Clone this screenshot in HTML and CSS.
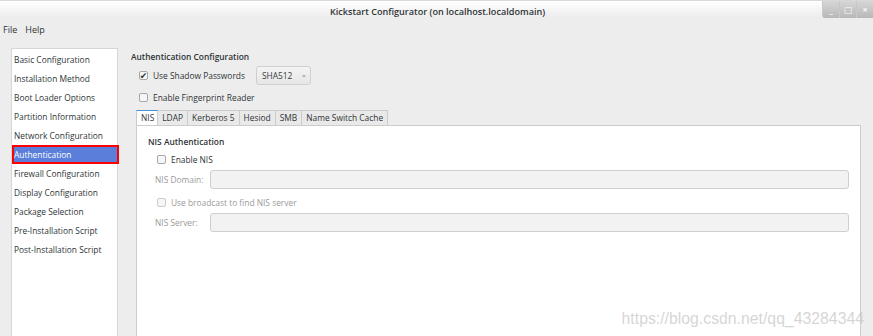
FILE: index.html
```html
<!DOCTYPE html>
<html>
<head>
  <meta charset="UTF-8">
  <title>Kickstart Configurator</title>
  <link rel="stylesheet" href="styles.css">
</head>
<body>
  <div class="titlebar">
    <span class="title">Kickstart Configurator (on localhost.localdomain)</span>
    <div class="wm-buttons">
      <span class="wm-btn">_</span>
      <span class="wm-btn">&#9633;</span>
      <span class="wm-btn">&#215;</span>
    </div>
  </div>
  <div class="menubar">
    <span>File</span>
    <span>Help</span>
  </div>

  <div class="content">
    <ul class="sidebar">
      <li>Basic Configuration</li>
      <li>Installation Method</li>
      <li>Boot Loader Options</li>
      <li>Partition Information</li>
      <li>Network Configuration</li>
      <li class="selected">Authentication</li>
      <li>Firewall Configuration</li>
      <li>Display Configuration</li>
      <li>Package Selection</li>
      <li>Pre-Installation Script</li>
      <li>Post-Installation Script</li>
    </ul>

    <div class="main">
      <div class="heading">Authentication Configuration</div>
      <div class="row shadow-row">
        <label class="check"><span class="box checked">&#10004;</span>Use Shadow Passwords</label>
        <span class="select">SHA512 <span class="caret">&#8964;</span></span>
      </div>
      <div class="row">
        <label class="check"><span class="box"></span>Enable Fingerprint Reader</label>
      </div>

      <div class="tabs">
        <span class="tab active">NIS</span>
        <span class="tab">LDAP</span>
        <span class="tab">Kerberos 5</span>
        <span class="tab">Hesiod</span>
        <span class="tab">SMB</span>
        <span class="tab">Name Switch Cache</span>
      </div>
      <div class="panel">
        <div class="heading">NIS Authentication</div>
        <div class="prow">
          <label class="check"><span class="box"></span>Enable NIS</label>
        </div>
        <div class="field disabled">
          <span class="flabel">NIS Domain:</span>
          <span class="input"></span>
        </div>
        <div class="prow disabled">
          <label class="check"><span class="box"></span>Use broadcast to find NIS server</label>
        </div>
        <div class="field disabled">
          <span class="flabel">NIS Server:</span>
          <span class="input"></span>
        </div>
      </div>
    </div>
  </div>

  <div class="watermark">https://blog.csdn.net/qq_43284344</div>
</body>
</html>
```

FILE: styles.css
```css
body {
  font-family: "Open Sans", "DejaVu Sans", sans-serif;
  font-size: 8.4px;
  color: #2e3436;
  background-color: #ededed;
  margin: 0;
  height: 336px;
  overflow: hidden;
  display: flex;
  flex-direction: column;
  position: relative;
}
.titlebar {
  height: 18px;
  display: flex;
  align-items: center;
  justify-content: center;
  background: linear-gradient(#ffffff, #ececec);
  border-top: 1px solid #d8d8d8;
  box-sizing: border-box;
  position: relative;
}
.title {
  font-size: 9.1px;
  font-weight: 600;
  color: #2e3436;
  margin-left: 2px;
  margin-top: 4px;
}
.wm-buttons {
  position: absolute;
  right: 0;
  top: 0;
  display: flex;
  height: 17px;
  border-bottom-left-radius: 3px;
  overflow: hidden;
}
.wm-btn {
  width: 17px;
  height: 17px;
  display: flex;
  align-items: center;
  justify-content: center;
  background: linear-gradient(#d6d6d6, #b8b8b8);
  border-left: 1px solid #c8c8c8;
  color: #fafafa;
  font-size: 9px;
  font-weight: bold;
  box-sizing: border-box;
}
.menubar {
  height: 22px;
  display: flex;
  align-items: center;
  gap: 8px;
  padding-left: 3px;
  font-size: 9px;
}
.content {
  display: flex;
  flex: 1;
  padding-top: 8px;
}
.sidebar {
  list-style: none;
  margin: 0 0 0 11px;
  padding: 1px 0 0 0;
  width: 107px;
  background-color: #ffffff;
  border: 1px solid #d6d6d6;
  border-bottom: none;
  box-sizing: border-box;
}
.sidebar li {
  height: 19px;
  line-height: 19px;
  padding-left: 2px;
  white-space: nowrap;
}
.sidebar li.selected {
  background-color: #5a7ed9;
  color: #ffffff;
  border: 2px solid #ff0000;
  box-sizing: border-box;
  line-height: 15px;
  margin-right: -2px;
  padding-left: 0;
}
.main {
  flex: 1;
  padding-left: 13px;
  padding-top: 2px;
  display: flex;
  flex-direction: column;
}
.heading {
  font-weight: 600;
  height: 14px;
  line-height: 14px;
}
.row {
  display: flex;
  align-items: center;
  padding-left: 8px;
  height: 22px;
}
.shadow-row {
  margin-top: 1px;
  height: 21px;
  gap: 11px;
}
.check {
  display: flex;
  align-items: center;
  gap: 5px;
}
.box {
  width: 7px;
  height: 7px;
  border: 1px solid #a8a8a8;
  border-radius: 2px;
  background-color: #f6f6f6;
  display: inline-flex;
  align-items: center;
  justify-content: center;
  font-size: 8px;
  line-height: 7px;
  color: #2e3436;
}
.box.checked {
  font-size: 9px;
  overflow: visible;
}
.select {
  width: 55px;
  height: 19px;
  box-sizing: border-box;
  border: 1px solid #cfcfcf;
  border-radius: 3px;
  background: linear-gradient(#f4f4f4, #e6e6e6);
  display: flex;
  align-items: center;
  padding-left: 5px;
  gap: 8px;
  color: #3a3a3a;
}
.caret {
  font-size: 8px;
  color: #888888;
  margin-top: -4px;
}
.tabs {
  display: flex;
  margin-left: 5px;
  margin-top: 2px;
  height: 15px;
}
.tab {
  border: 1px solid #cccccc;
  border-bottom: none;
  border-left: none;
  padding: 0 4px;
  line-height: 14px;
  background-color: #e9e9e9;
  box-sizing: border-box;
}
.tab.active {
  background-color: #ffffff;
  border-left: 1px solid #cccccc;
  border-top: 1px solid #4a90d9;
  padding: 0 3px 0 4px;
}
.panel {
  flex: 1;
  margin-left: 5px;
  margin-right: 12px;
  background-color: #ffffff;
  border: 1px solid #cccccc;
  border-bottom: none;
  padding: 9px 11px 0 11px;
}
.panel .heading {
  margin-bottom: 1px;
}
.prow {
  display: flex;
  align-items: center;
  height: 18px;
  padding-left: 9px;
}
.field {
  display: flex;
  align-items: center;
  height: 21px;
  padding-left: 7px;
  margin: 1px 0 3px;
}
.flabel {
  width: 55px;
}
.input {
  flex: 1;
  height: 19px;
  box-sizing: border-box;
  border: 1px solid #cfcfcf;
  border-radius: 3px;
  background-color: #f2f2f2;
}
.disabled {
  color: #9a9a9a;
}
.disabled .box {
  border-color: #cccccc;
}
.watermark {
  position: absolute;
  right: 9px;
  bottom: 8px;
  font-family: "Liberation Sans", Arial, sans-serif;
  font-size: 15.8px;
  color: rgba(200, 200, 200, 0.75);
}
```
